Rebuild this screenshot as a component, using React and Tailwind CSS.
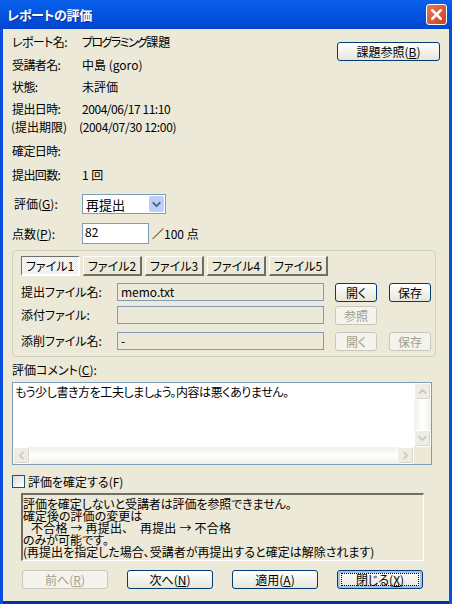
import { ChevronDown, ChevronUp, ChevronLeft, ChevronRight, X } from 'lucide-react';

const XpButton = ({ children, disabled, focused, className = '' }) => (
  <div
    className={`flex items-center justify-center rounded-[3px] border ${
      disabled
        ? 'border-[#c9c7ba] bg-[#f4f3ee] text-[#a19e8d]'
        : 'border-[#003c74] bg-gradient-to-b from-white to-[#e8e6da] text-black'
    } ${focused ? 'shadow-[inset_0_0_0_2px_#a9c0ea]' : ''} ${className}`}
  >
    {children}
  </div>
);

const U = ({ children }) => <span className="underline">{children}</span>;

const InfoRow = ({ label, value, className = '', valueClass = '' }) => (
  <div className={`flex h-[18px] items-center ${className}`}>
    <span className="w-[70px] shrink-0 tracking-[-0.6px]">{label}</span>
    <span className={valueClass}>{value}</span>
  </div>
);

const FileTab = ({ label, active }) => (
  <div
    className={`flex h-[20px] w-[59px] items-center justify-center border-t border-l border-b-2 border-r-2 ${
      active
        ? 'border-t-[#716f64] border-l-[#716f64] border-b-white border-r-white bg-[conic-gradient(#fff_25%,#ece9d8_0_50%,#fff_0_75%,#ece9d8_0)] bg-[length:2px_2px]'
        : 'border-t-white border-l-white border-b-[#716f64] border-r-[#716f64] bg-[#ece9d8]'
    }`}
  >
    {label}
  </div>
);

const FileRow = ({ label, value, children, className = '' }) => (
  <div className={`flex items-start ${className}`}>
    <span className="flex h-[18px] w-[96px] shrink-0 items-center">{label}</span>
    <div className="flex h-[18px] w-[207px] shrink-0 items-center border border-[#7f9db9] px-[3px]">{value}</div>
    <div className="ml-[11px] flex gap-[12px]">{children}</div>
  </div>
);

const ScrollArrow = ({ Icon }) => (
  <div className="flex h-[17px] w-[17px] items-center justify-center rounded-[2px] border border-white bg-[#eeede5] shadow-[inset_-1px_-1px_0_#d8d6c8]">
    <Icon className="h-[13px] w-[13px] text-[#c9c7ba]" strokeWidth={3} />
  </div>
);

export default function App() {
  return (
    <div
      className="flex h-[604px] w-[452px] flex-col overflow-hidden bg-[#0a4fe0] text-[12px] leading-none text-black [font-feature-settings:'palt']"
      style={{ fontFamily: '"Noto Sans CJK JP", "Liberation Sans", sans-serif' }}
    >
      {/* Title bar */}
      <div className="flex h-[29px] shrink-0 items-center justify-between bg-gradient-to-b from-[#0b61ee] via-[#0453dd] to-[#0246cf] pl-[7px] pr-[5px]">
        <span className="text-[13px] font-bold tracking-[-0.3px] text-white [text-shadow:1px_1px_0_#0a2f9c]">レポートの評価</span>
        <div className="flex h-[21px] w-[21px] items-center justify-center rounded-[3px] border border-white bg-gradient-to-br from-[#e2775a] to-[#c9401f]">
          <X className="h-[17px] w-[17px] text-white" strokeWidth={3.5} />
        </div>
      </div>

      {/* Dialog body */}
      <div className="mx-[3px] flex-1 border-b-[3px] border-b-[#0831a9] bg-[#ece9d8] pl-[9px]">
        <div className="flex">
          <div className="w-[325px] shrink-0">
            <InfoRow
              className="mt-[4px]"
              label="レポート名:"
              value={
                <>
                  <span className="tracking-[-1.6px]">プログラミング</span>
                  <span>課題</span>
                </>
              }
            />
            <InfoRow className="mt-[5px]" label="受講者名:" value="中島 (goro)" />
            <InfoRow className="mt-[4px]" label="状態:" value="未評価" />
            <InfoRow className="mt-[4px]" label="提出日時:" value="2004/06/17 11:10" valueClass="tracking-[-0.45px]" />
            <div className="flex h-[18px] items-center">
              <span className="ml-[-1px] w-[68px] shrink-0">(提出期限)</span>
              <span className="tracking-[-0.35px]">(2004/07/30 12:00)</span>
            </div>
            <InfoRow className="mt-[6px]" label="確定日時:" value="" />
            <InfoRow className="mt-[6px]" label="提出回数:" value="1 回" />
          </div>
          <XpButton className="mt-[13px] h-[19px] w-[103px]">
            <span>
              課題参照(<U>B</U>)
            </span>
          </XpButton>
        </div>

        <div className="mt-[10px] flex items-center">
          <span className="ml-[2px] w-[68px] shrink-0">
            評価(<U>G</U>):
          </span>
          <div className="flex h-[20px] w-[84px] items-center justify-between border border-[#7f9db9] bg-white pl-[3px] pr-[1px] text-[13px]">
            <span>再提出</span>
            <div className="flex h-[16px] w-[15px] items-center justify-center rounded-[2px] bg-[#bccdf6]">
              <ChevronDown className="h-[13px] w-[13px] text-[#4d6185]" strokeWidth={3.5} />
            </div>
          </div>
        </div>

        <div className="mt-[9px] flex items-center">
          <span className="w-[70px] shrink-0">
            点数(<U>P</U>):
          </span>
          <div className="h-[21px] w-[67px] border border-[#7f9db9] bg-white pl-[2px] pt-[2px]">82</div>
          <span className="ml-[3px]">／100 点</span>
        </div>

        {/* File group */}
        <div className="mt-[6px] h-[107px] w-[424px] rounded-[4px] border border-[#d0d0bf] pl-[8px] pt-[5px]">
          <div className="flex gap-[3px]">
            <FileTab label="ファイル1" active />
            <FileTab label="ファイル2" />
            <FileTab label="ファイル3" />
            <FileTab label="ファイル4" />
            <FileTab label="ファイル5" />
          </div>
          <FileRow className="mt-[7px]" label="提出ファイル名:" value="memo.txt">
            <XpButton className="h-[19px] w-[42px]">開く</XpButton>
            <XpButton className="h-[19px] w-[42px]">保存</XpButton>
          </FileRow>
          <FileRow className="mt-[4px]" label="添付ファイル:" value="">
            <XpButton disabled className="h-[19px] w-[42px]">参照</XpButton>
          </FileRow>
          <FileRow className="mt-[7px]" label="添削ファイル名:" value="-">
            <XpButton disabled className="h-[19px] w-[42px]">開く</XpButton>
            <XpButton disabled className="h-[19px] w-[42px]">保存</XpButton>
          </FileRow>
        </div>

        {/* Comment */}
        <div className="mt-[7px] flex h-[12px] items-center">
          評価コメント(<U>C</U>):
        </div>
        <div className="mt-[6px] flex h-[83px] w-[420px] flex-col border border-[#7f9db9] bg-white">
          <div className="flex flex-1">
            <div className="flex-1 pl-[2px] pt-[3px] tracking-[-0.42px]">もう少し書き方を工夫しましょう。内容は悪くありません。</div>
            <div className="flex w-[17px] flex-col justify-between bg-gradient-to-r from-[#f1f0ea] via-white to-[#f1f0ea]">
              <ScrollArrow Icon={ChevronUp} />
              <ScrollArrow Icon={ChevronDown} />
            </div>
          </div>
          <div className="flex h-[17px]">
            <div className="flex flex-1 justify-between bg-gradient-to-b from-[#f1f0ea] via-white to-[#f1f0ea]">
              <ScrollArrow Icon={ChevronLeft} />
              <ScrollArrow Icon={ChevronRight} />
            </div>
            <div className="w-[17px] bg-[#ece9d8]" />
          </div>
        </div>

        <div className="mt-[10px] flex items-center gap-[3px]">
          <div className="h-[13px] w-[13px] border border-[#1c5180] bg-gradient-to-br from-[#dcdcd7] to-white" />
          <span>評価を確定する(F)</span>
        </div>

        {/* Notes */}
        <div className="ml-[9px] mt-[5px] h-[68px] w-[403px] border border-t-2 border-l-2 border-b-white border-r-white border-t-[#716f64] border-l-[#716f64] leading-[12px]">
          <div className="mt-[3px] tracking-[-0.1px]">評価を確定しないと受講者は評価を参照できません。</div>
          <div>確定後の評価の変更は</div>
          <div className="whitespace-pre pl-[8px] tracking-[0.2px]">不合格 → 再提出、    再提出 → 不合格</div>
          <div>のみが可能です。</div>
          <div>(再提出を指定した場合、受講者が再提出すると確定は解除されます)</div>
        </div>

        {/* Footer buttons */}
        <div className="ml-[10px] mt-[9px] flex gap-[19px]">
          <XpButton disabled className="h-[19px] w-[86px]">
            <span>
              前へ(<U>R</U>)
            </span>
          </XpButton>
          <XpButton className="h-[19px] w-[86px]">
            <span>
              次へ(<U>N</U>)
            </span>
          </XpButton>
          <XpButton className="h-[19px] w-[86px]">
            <span>
              適用(<U>A</U>)
            </span>
          </XpButton>
          <XpButton focused className="h-[19px] w-[86px]">
            <div className="flex h-[13px] w-[78px] items-center justify-center border border-dotted border-black">
              <span>
                閉じる(<U>X</U>)
              </span>
            </div>
          </XpButton>
        </div>
      </div>
    </div>
  );
}
